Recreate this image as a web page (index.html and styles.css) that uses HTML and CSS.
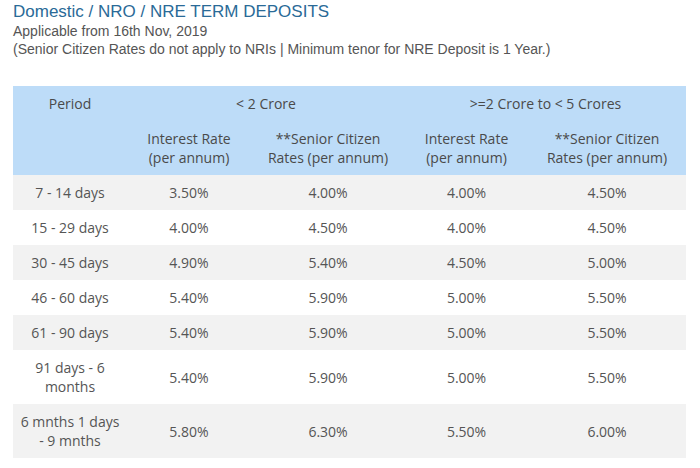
FILE: index.html
```html
<!DOCTYPE html>
<html>
<head>
<meta charset="utf-8">
<link rel="stylesheet" href="styles.css">
</head>
<body>
<div class="page">
  <h1 class="title">Domestic / NRO / NRE TERM DEPOSITS</h1>
  <p class="sub">Applicable from 16th Nov, 2019</p>
  <p class="note">(Senior Citizen Rates do not apply to NRIs | Minimum tenor for NRE Deposit is 1 Year.)</p>
  <table class="rates">
    <colgroup>
      <col class="c0"><col class="c1"><col class="c2"><col class="c3"><col class="c4">
    </colgroup>
    <thead>
      <tr><th>Period</th><th colspan="2">&lt; 2 Crore</th><th colspan="2">&gt;=2 Crore to &lt; 5 Crores</th></tr>
      <tr><th></th><th>Interest Rate<br>(per annum)</th><th>**Senior Citizen<br>Rates (per annum)</th><th>Interest Rate<br>(per annum)</th><th>**Senior Citizen<br>Rates (per annum)</th></tr>
    </thead>
    <tbody>
      <tr><td>7 - 14 days</td><td>3.50%</td><td>4.00%</td><td>4.00%</td><td>4.50%</td></tr>
      <tr><td>15 - 29 days</td><td>4.00%</td><td>4.50%</td><td>4.00%</td><td>4.50%</td></tr>
      <tr><td>30 - 45 days</td><td>4.90%</td><td>5.40%</td><td>4.50%</td><td>5.00%</td></tr>
      <tr><td>46 - 60 days</td><td>5.40%</td><td>5.90%</td><td>5.00%</td><td>5.50%</td></tr>
      <tr><td>61 - 90 days</td><td>5.40%</td><td>5.90%</td><td>5.00%</td><td>5.50%</td></tr>
      <tr><td>91 days - 6<br>months</td><td>5.40%</td><td>5.90%</td><td>5.00%</td><td>5.50%</td></tr>
      <tr><td>6 mnths 1 days<br>- 9 mnths</td><td>5.80%</td><td>6.30%</td><td>5.50%</td><td>6.00%</td></tr>
    </tbody>
  </table>
</div>
</body>
</html>
```
FILE: styles.css
```css
html, body { margin: 0; padding: 0; background: #fff; }
.page { padding: 0 13px; }
.title {
  margin: 0;
  padding-top: 2px;
  font-family: "Liberation Sans", Arial, sans-serif;
  font-weight: normal;
  font-size: 17px;
  line-height: 20px;
  color: #2a6a97;
}
.sub {
  margin: 0;
  font-family: "Liberation Sans", Arial, sans-serif;
  font-size: 14px;
  line-height: 18px;
  color: #555;
}
.note {
  margin: 0;
  font-family: "Liberation Sans", Arial, sans-serif;
  font-size: 14px;
  line-height: 18px;
  color: #555;
}
.rates {
  margin-top: 28px;
  width: 673px;
  border-collapse: collapse;
  table-layout: fixed;
  font-family: "Open Sans", sans-serif;
  font-size: 14px;
  line-height: 19px;
  color: #555;
}
.c0 { width: 114px; }
.c1 { width: 124px; }
.c2 { width: 154px; }
.c3 { width: 123px; }
.c4 { width: 158px; }
.rates th, .rates td {
  padding: 8px 4px;
  text-align: center;
  vertical-align: middle;
  font-weight: normal;
}
.rates thead tr { background: #bddcf8; }
.rates thead th { color: #4a4a4a; }
.rates tbody tr:nth-child(odd) { background: #f2f2f2; }
.rates tbody tr:nth-child(even) { background: #fff; }
```
